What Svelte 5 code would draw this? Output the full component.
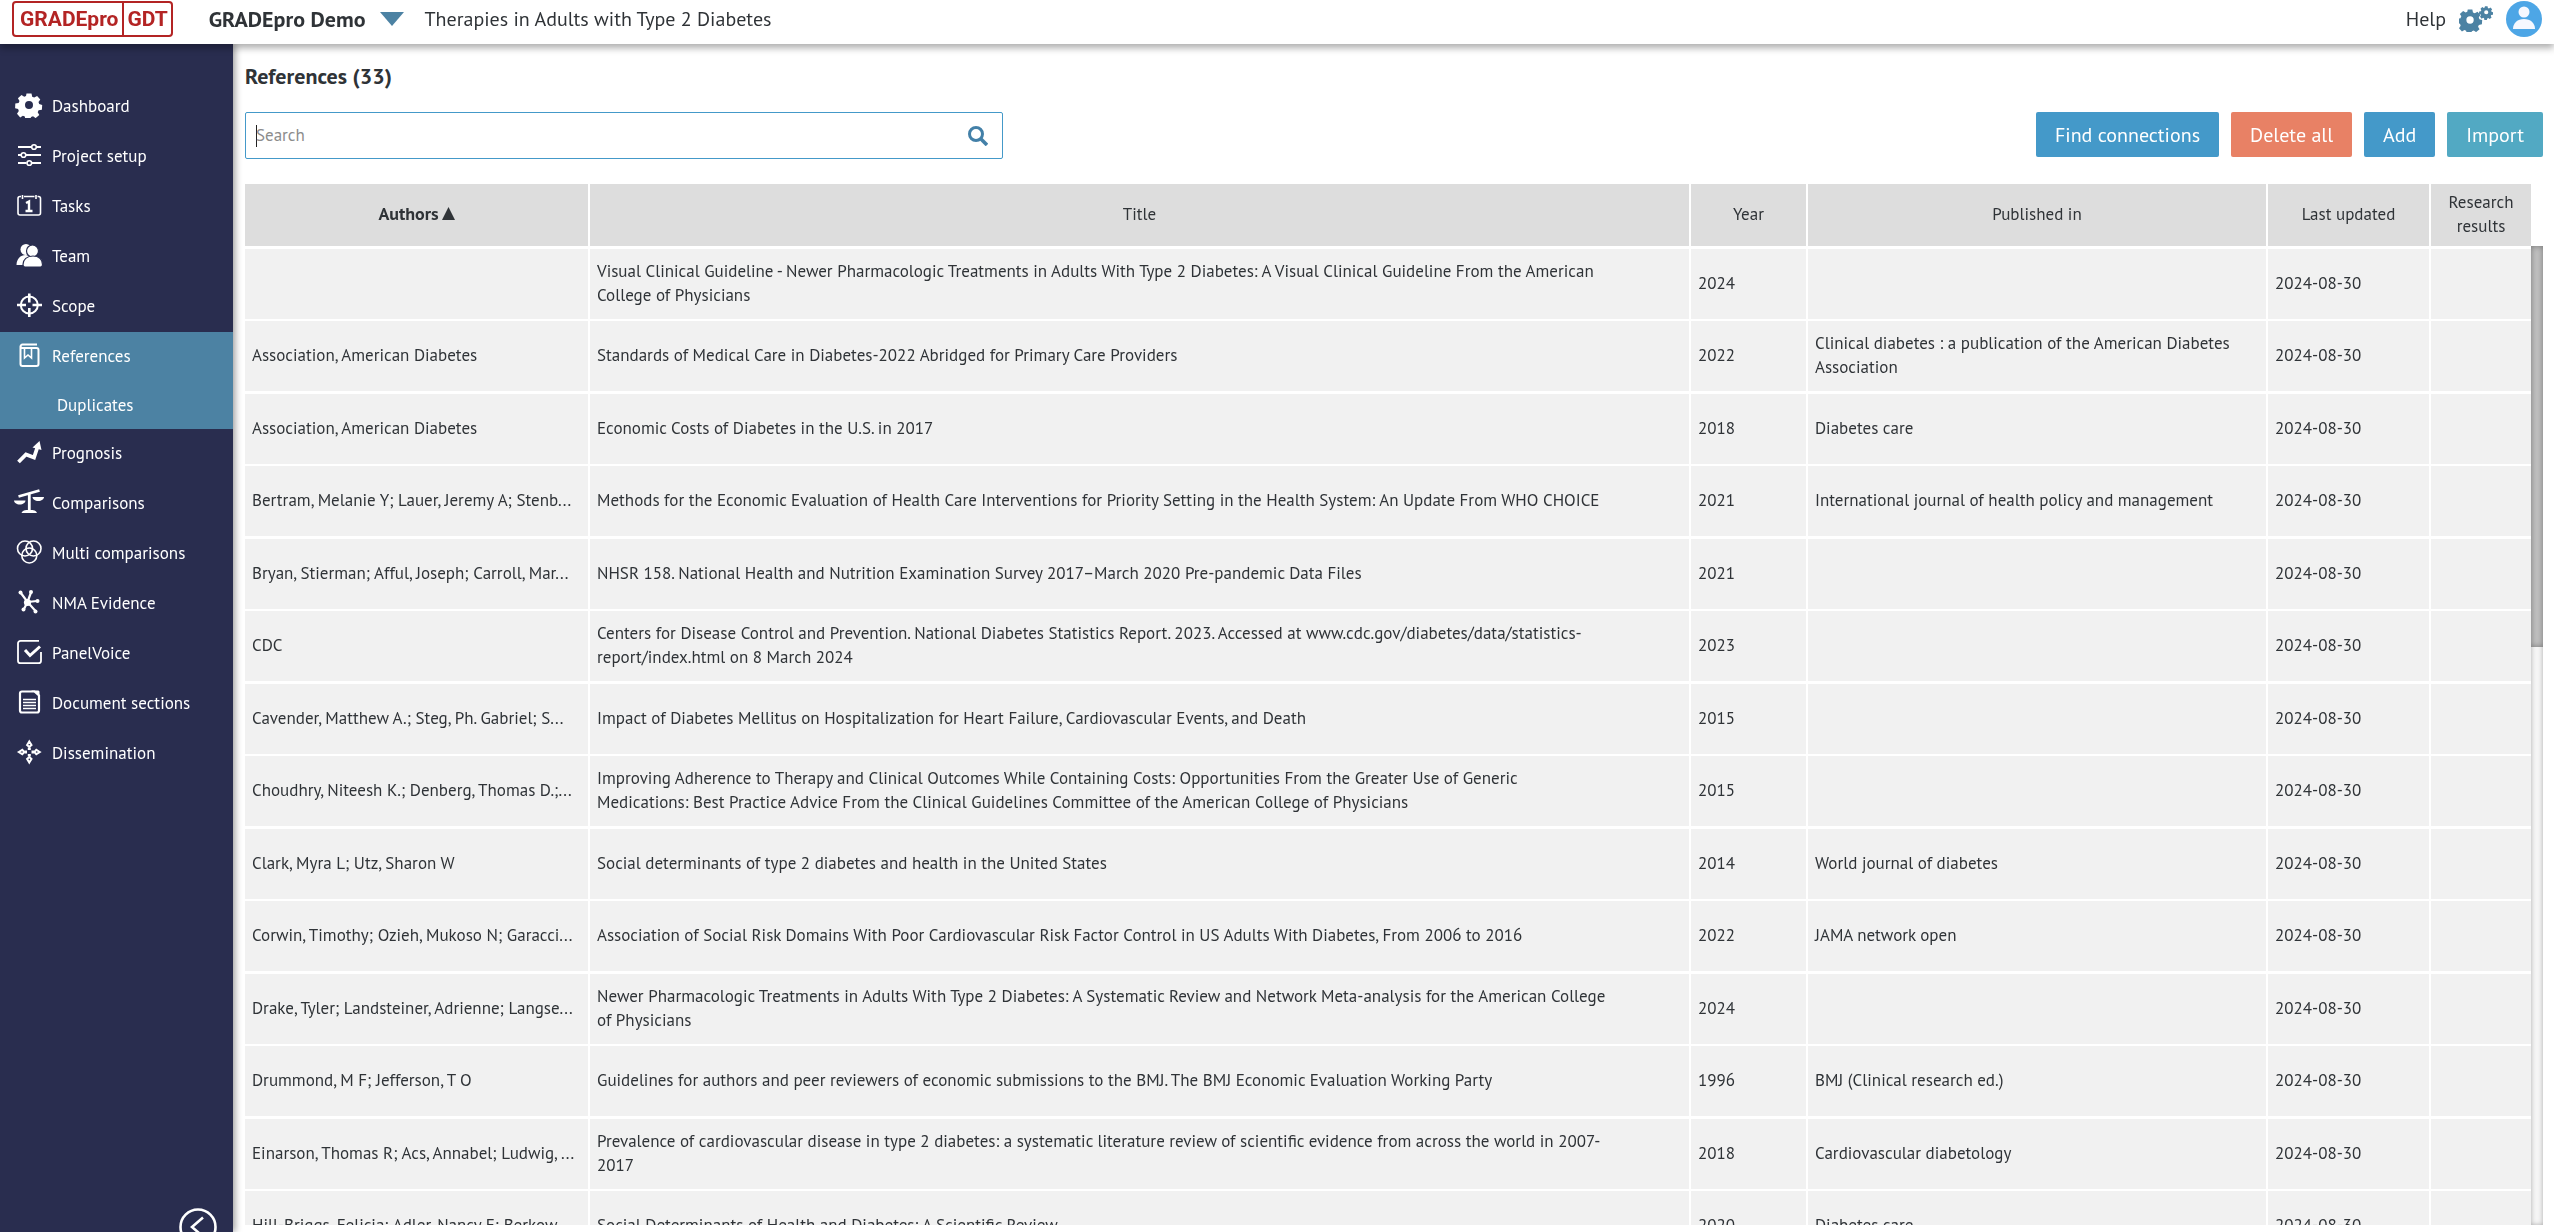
<script lang="ts">
	import { onMount } from 'svelte';

	type Reference = {
		authors: string;
		title: string;
		year: number;
		published: string;
		updated: string;
	};

	const navItems = [
		{ icon: 'gear', label: 'Dashboard' },
		{ icon: 'sliders', label: 'Project setup' },
		{ icon: 'calendar', label: 'Tasks' },
		{ icon: 'team', label: 'Team' },
		{ icon: 'target', label: 'Scope' },
		{ icon: 'book', label: 'References', active: true, child: 'Duplicates' },
		{ icon: 'chart', label: 'Prognosis' },
		{ icon: 'scales', label: 'Comparisons' },
		{ icon: 'rings', label: 'Multi comparisons' },
		{ icon: 'network', label: 'NMA Evidence' },
		{ icon: 'check', label: 'PanelVoice' },
		{ icon: 'document', label: 'Document sections' },
		{ icon: 'arrows', label: 'Dissemination' }
	];

	const updated = '2024-08-30';

	const references: Reference[] = [
		{ authors: '', title: 'Visual Clinical Guideline - Newer Pharmacologic Treatments in Adults With Type 2 Diabetes: A Visual Clinical Guideline From the American College of Physicians', year: 2024, published: '', updated },
		{ authors: 'Association, American Diabetes', title: 'Standards of Medical Care in Diabetes-2022 Abridged for Primary Care Providers', year: 2022, published: 'Clinical diabetes : a publication of the American Diabetes Association', updated },
		{ authors: 'Association, American Diabetes', title: 'Economic Costs of Diabetes in the U.S. in 2017', year: 2018, published: 'Diabetes care', updated },
		{ authors: 'Bertram, Melanie Y; Lauer, Jeremy A; Stenb...', title: 'Methods for the Economic Evaluation of Health Care Interventions for Priority Setting in the Health System: An Update From WHO CHOICE', year: 2021, published: 'International journal of health policy and management', updated },
		{ authors: 'Bryan, Stierman; Afful, Joseph; Carroll, Mar...', title: 'NHSR 158. National Health and Nutrition Examination Survey 2017–March 2020 Pre-pandemic Data Files', year: 2021, published: '', updated },
		{ authors: 'CDC', title: 'Centers for Disease Control and Prevention. National Diabetes Statistics Report. 2023. Accessed at www.cdc.gov/diabetes/data/statistics-report/index.html on 8 March 2024', year: 2023, published: '', updated },
		{ authors: 'Cavender, Matthew A.; Steg, Ph. Gabriel; S...', title: 'Impact of Diabetes Mellitus on Hospitalization for Heart Failure, Cardiovascular Events, and Death', year: 2015, published: '', updated },
		{ authors: 'Choudhry, Niteesh K.; Denberg, Thomas D.;...', title: 'Improving Adherence to Therapy and Clinical Outcomes While Containing Costs: Opportunities From the Greater Use of Generic Medications: Best Practice Advice From the Clinical Guidelines Committee of the American College of Physicians', year: 2015, published: '', updated },
		{ authors: 'Clark, Myra L; Utz, Sharon W', title: 'Social determinants of type 2 diabetes and health in the United States', year: 2014, published: 'World journal of diabetes', updated },
		{ authors: 'Corwin, Timothy; Ozieh, Mukoso N; Garacci...', title: 'Association of Social Risk Domains With Poor Cardiovascular Risk Factor Control in US Adults With Diabetes, From 2006 to 2016', year: 2022, published: 'JAMA network open', updated },
		{ authors: 'Drake, Tyler; Landsteiner, Adrienne; Langse...', title: 'Newer Pharmacologic Treatments in Adults With Type 2 Diabetes: A Systematic Review and Network Meta-analysis for the American College of Physicians', year: 2024, published: '', updated },
		{ authors: 'Drummond, M F; Jefferson, T O', title: 'Guidelines for authors and peer reviewers of economic submissions to the BMJ. The BMJ Economic Evaluation Working Party', year: 1996, published: 'BMJ (Clinical research ed.)', updated },
		{ authors: 'Einarson, Thomas R; Acs, Annabel; Ludwig, ...', title: 'Prevalence of cardiovascular disease in type 2 diabetes: a systematic literature review of scientific evidence from across the world in 2007-2017', year: 2018, published: 'Cardiovascular diabetology', updated },
		{ authors: 'Hill-Briggs, Felicia; Adler, Nancy E; Berkow...', title: 'Social Determinants of Health and Diabetes: A Scientific Review', year: 2020, published: 'Diabetes care', updated }
	];

	let search = $state('');
	let searchEl = $state<HTMLInputElement | null>(null);

	onMount(() => searchEl?.focus());
</script>

{#snippet gear()}
	<path
		fill-rule="evenodd"
		d="M9.5 0.5h5l.7 3.2 2 .9 2.900-1.700 3.200 3.500-1.800 2.700.700 2 3 .8-.3 4.800-3.300.6-.9 2 1.600 2.700-3.700 3.100-2.600-1.800-2 .8-.9 3-4.700-.3-.6-3.200-1.900-.9-2.700 1.700-3.200-3.600 1.800-2.700-.7-2-3-.8.2-4.700 3.300-.6.9-2L.9 5.300 4.500 2.100l2.700 1.700 1.800-.7zM12 8a4 4 0 1 0 0 8 4 4 0 0 0 0-8z"
	/>
{/snippet}

{#snippet navIcon(name: string)}
	<svg class="nav-icon" viewBox="0 0 30 26" fill="none" stroke="currentColor" stroke-width="1.6" aria-hidden="true">
		{#if name === 'gear'}
			<g transform="translate(3 1)" fill="currentColor" stroke="none">{@render gear()}</g>
		{:else if name === 'sliders'}
			<path d="M4 5h13.500M22.500 5H27M4 13h3M12 13h15M4 21h8.500M18 21h9" stroke-width="2" />
			<circle cx="20" cy="5" r="2.300" />
			<circle cx="9.500" cy="13" r="2.300" />
			<circle cx="15.300" cy="21" r="2.300" />
		{:else if name === 'calendar'}
			<path d="M7 4.500H6a2 2 0 0 0-2 2V21a2 2 0 0 0 2 2h18.500a2 2 0 0 0 2-2V6.500a2 2 0 0 0-2-2h-1M10 4.500h10.500M8.500 3v4M22 3v4" />
			<path d="M12 11l3-1.500v9M11.500 19h7" stroke-width="2.400" />
		{:else if name === 'team'}
			<g fill="currentColor" stroke="none">
				<circle cx="12" cy="7.500" r="5.500" />
				<path d="M2.500 23c0-6 4-10 9-10 4 0 6 3 6 10z" />
				<g stroke="#292d4f" stroke-width="1.200">
					<circle cx="18.500" cy="9" r="6" />
					<path d="M9 22.500c0-5 4-8.500 10-8.500s9.500 3.500 9.500 8.500c0 1.500-.5 2.500-2 2.500H11c-1.500 0-2-1-2-2.500z" />
				</g>
			</g>
		{:else if name === 'target'}
			<circle cx="15.300" cy="13" r="8.500" stroke-width="2" />
			<path d="M15.300 1.500v9M15.300 16v9M3 13h9M18.500 13h9.500" stroke-width="2.600" />
		{:else if name === 'book'}
			<path d="M23 2.500H8.500a2 2 0 0 0-2 2V22a2 2 0 0 0 2 2H22.500a2 2 0 0 0 2-2V8a2 2 0 0 0-2-2H8.500a2 2 0 0 1-2-2" stroke-width="2" />
			<path d="M10.500 6v10l3.500-3 3.500 3V6" />
		{:else if name === 'chart'}
			<path d="M4.500 23l7.500-7.500 8 3L23.500 8" stroke-width="3.800" />
			<path d="M18.500 8.500L25.500 2l2 9z" fill="currentColor" stroke="none" />
		{:else if name === 'scales'}
			<path d="M15.300 4v19M4.500 7.500L25.500 1.500" stroke-width="2.800" />
			<path d="M0 11.500h11.500c0 2-2.500 4-5.700 4S0 13.500 0 11.500zM18.500 8H30c0 2-2.500 4-5.700 4S18.500 10 18.500 8zM7.500 24c1-2.500 3-3 7.800-3s6.800.5 7.700 3z" fill="currentColor" stroke="none" />
		{:else if name === 'rings'}
			<circle cx="11" cy="9.500" r="7.500" />
			<circle cx="19.500" cy="9.500" r="7.500" />
			<circle cx="15.300" cy="16.500" r="7.500" />
		{:else if name === 'network'}
			<path d="M6.500 3.500L13.500 13 17 3.500M13.500 13l9.500-1M13.500 13l-3.500 7M13.500 13l8 9" stroke-width="2.200" />
			<g fill="currentColor" stroke="none">
				<circle cx="13.500" cy="13.500" r="3.600" />
				<circle cx="6.500" cy="3.500" r="2" />
				<circle cx="17" cy="3" r="2" />
				<circle cx="23.500" cy="12" r="2" />
				<circle cx="9.500" cy="20.500" r="2" />
				<circle cx="21.500" cy="22.500" r="2" />
			</g>
		{:else if name === 'check'}
			<path d="M25 1.800H6.500a2.500 2.500 0 0 0-2.500 2.500v17.400a2.500 2.500 0 0 0 2.500 2.500h18a2.500 2.500 0 0 0 2.500-2.500V13" stroke-width="1.800" />
			<path d="M11 11l5 5.500L26 7.500" stroke-width="3" />
		{:else if name === 'document'}
			<path d="M8 2.500h12.500l4.500 4V21.500a2 2 0 0 1-2 2H8a2 2 0 0 1-2-2v-17a2 2 0 0 1 2-2z" stroke-width="2.200" />
			<path d="M17 1.500h7.500l1 1V10c0-4-4-6.500-8.500-8.500z" fill="currentColor" stroke="none" />
			<path d="M9 10.500h13M9 13.500h13M9 16.500h13M9 19.500h13" />
		{:else if name === 'arrows'}
			<path d="M15.300 2.500l2.200 3.500-2.200 2-2.200-2zM15.300 23.500l2.200-3.500-2.200-2-2.200 2zM4.800 13l3.500-2.200 2 2.200-2 2.200zM25.800 13l-3.500-2.200-2 2.200 2 2.200z" stroke-width="2" />
			<path d="M15.300 8.500v2.500M15.300 15v2.500M10.500 13h2.500M17.500 13h2.500" stroke-width="3" />
		{/if}
	</svg>
{/snippet}

<div class="app">
	<header class="topbar">
		<a class="logo" href="#home" aria-label="GRADEpro GDT"><span>GRADEpro</span><span class="gdt">GDT</span></a>
		<button class="workspace">
			GRADEpro Demo
			<svg width="24" height="14" viewBox="0 0 24 14" aria-hidden="true"><path d="M0 0h24L12 14z" fill="#4c82a3" /></svg>
		</button>
		<span class="project">Therapies in Adults with Type 2 Diabetes</span>
		<nav class="tools" aria-label="Account">
			<a href="#help">Help</a>
			<button class="icon-btn" aria-label="Settings">
				<svg width="34" height="26" viewBox="0 0 34 26" fill="#4c82a3" aria-hidden="true">
					<g transform="translate(0 3) scale(0.92)">{@render gear()}</g>
					<g transform="translate(21 0) scale(0.52)">{@render gear()}</g>
				</svg>
			</button>
			<button class="icon-btn" aria-label="Profile">
				<svg width="36" height="36" viewBox="0 0 36 36" aria-hidden="true">
					<circle cx="18" cy="18" r="18" fill="#4da6e6" />
					<circle cx="18" cy="11" r="5.500" fill="#f5f8ff" />
					<path d="M7 28c0-6 4.500-10 11-10s11 4 11 10z" fill="#f5f8ff" />
				</svg>
			</button>
		</nav>
	</header>

	<div class="body">
		<aside class="sidebar">
			<nav aria-label="Project">
				{#each navItems as item}
					<div class="nav-group" class:active={item.active}>
						<a class="nav-link" href="#{item.icon}">
							{@render navIcon(item.icon)}
							{item.label}
						</a>
						{#if item.child}
							<a class="nav-sub" href="#duplicates">{item.child}</a>
						{/if}
					</div>
				{/each}
			</nav>
			<button class="collapse" aria-label="Collapse menu">
				<svg width="38" height="38" viewBox="0 0 38 38" fill="none" stroke="#fff" stroke-width="2.600" aria-hidden="true">
					<circle cx="19" cy="19" r="17.500" />
					<path d="M24 9.500L13 19l11 9.500" />
				</svg>
			</button>
		</aside>

		<main>
			<h1>References (33)</h1>
			<div class="toolbar">
				<div class="search">
					<input type="text" placeholder="Search" aria-label="Search" bind:value={search} bind:this={searchEl} />
					<button class="icon-btn" aria-label="Run search">
						<svg width="20" height="20" viewBox="0 0 20 20" fill="none" stroke="#4380a8" stroke-width="3" aria-hidden="true">
							<circle cx="8" cy="8" r="6.500" />
							<path d="M13 13l6 6" stroke-width="3.600" />
						</svg>
					</button>
				</div>
				<div class="actions">
					<button class="btn">Find connections</button>
					<button class="btn danger">Delete all</button>
					<button class="btn">Add</button>
					<button class="btn import">Import</button>
				</div>
			</div>

			<div class="grid">
				<div class="table-wrap">
					<table>
						<colgroup>
							<col class="c-authors" />
							<col />
							<col class="c-year" />
							<col class="c-published" />
							<col class="c-updated" />
							<col class="c-results" />
						</colgroup>
						<thead>
							<tr>
								<th class="sorted">Authors<svg width="13" height="13" viewBox="0 0 13 13" aria-hidden="true"><path d="M6.500 0L13 13H0z" fill="currentColor" /></svg></th>
								<th>Title</th>
								<th>Year</th>
								<th>Published in</th>
								<th>Last updated</th>
								<th>Research results</th>
							</tr>
						</thead>
						<tbody>
							{#each references as ref}
								<tr>
									<td class="authors">{ref.authors}</td>
									<td class="title">{ref.title}</td>
									<td>{ref.year}</td>
									<td>{ref.published}</td>
									<td>{ref.updated}</td>
									<td></td>
								</tr>
							{/each}
						</tbody>
					</table>
				</div>
				<div class="scrollbar"><div class="thumb"></div></div>
			</div>
		</main>
	</div>
</div>

<style>
	:global(body) {
		margin: 0;
	}

	.app {
		height: 100vh;
		display: flex;
		flex-direction: column;
		overflow: hidden;
		background: #fff;
		color: #2f3337;
		font-family: 'PT Sans', Lato, 'Open Sans', sans-serif;
		font-size: 17px;
	}

	a {
		color: inherit;
		text-decoration: none;
	}

	button {
		font: inherit;
		color: inherit;
		border: 0;
		padding: 0;
		background: none;
		cursor: pointer;
	}

	.topbar {
		position: relative;
		z-index: 2;
		height: 44px;
		flex-shrink: 0;
		display: flex;
		align-items: center;
		box-sizing: border-box;
		padding: 0 12px 6px;
		background: #fff;
		box-shadow: 0 4px 7px rgba(0, 0, 0, 0.32);
		font-size: 20px;
	}

	.logo {
		display: flex;
		box-sizing: border-box;
		height: 36px;
		line-height: 32px;
		border: 2px solid #b32424;
		border-radius: 4px;
		color: #b32424;
		font-family: Roboto, sans-serif;
		font-size: 21px;
		font-weight: 700;
	}

	.logo span {
		padding: 0 4px 0 6px;
	}

	.logo .gdt {
		border-left: 2px solid #b32424;
		padding: 0 3px;
	}

	.workspace {
		display: flex;
		align-items: center;
		gap: 15px;
		margin: 0 20px 0 36px;
		font-size: 22px;
		font-weight: 700;
	}

	.tools {
		display: flex;
		align-items: center;
		gap: 13px;
		margin-left: auto;
	}

	.icon-btn {
		display: flex;
	}

	.body {
		flex: 1;
		min-height: 0;
		display: flex;
	}

	.sidebar {
		position: relative;
		z-index: 1;
		width: 233px;
		flex-shrink: 0;
		box-sizing: border-box;
		padding-top: 38px;
		overflow: hidden;
		background: #292d4f;
		color: #fff;
		box-shadow: 2px 0 7px rgba(0, 0, 0, 0.4);
	}

	.nav-link {
		display: flex;
		align-items: center;
		gap: 8px;
		box-sizing: border-box;
		height: 50px;
		padding: 0 0 2px 14px;
	}

	.nav-icon {
		width: 30px;
		height: 26px;
		flex-shrink: 0;
		margin-bottom: 2px;
	}

	.nav-sub {
		display: flex;
		align-items: center;
		box-sizing: border-box;
		height: 47px;
		padding: 0 0 2px 57px;
	}

	.active {
		background: #4c82a3;
	}

	.collapse {
		position: absolute;
		right: 16px;
		bottom: -14px;
		height: 38px;
	}

	main {
		flex: 1;
		min-width: 0;
		display: flex;
		flex-direction: column;
		box-sizing: border-box;
		padding: 16px 11px 7px 12px;
	}

	h1 {
		margin: 0 0 20px;
		font-size: 22px;
		line-height: 32px;
	}

	.toolbar {
		display: flex;
		justify-content: space-between;
		margin-bottom: 25px;
	}

	.search {
		display: flex;
		align-items: center;
		box-sizing: border-box;
		width: 758px;
		height: 47px;
		padding: 0 14px 0 10px;
		border: 1px solid #4499c9;
		border-radius: 2px;
	}

	.search input {
		flex: 1;
		padding: 0 0 2px;
		border: 0;
		outline: 0;
		background: none;
		font: inherit;
	}

	.search input::placeholder {
		color: #8c8c8c;
	}

	/* solid caret while the box is still empty */
	.search input:placeholder-shown:focus {
		caret-color: transparent;
		background: linear-gradient(#222, #222) left center / 1px 22px no-repeat;
	}

	.actions {
		display: flex;
		gap: 12px;
	}

	.btn {
		height: 45px;
		padding: 0 19px;
		border-radius: 2px;
		background: #4499c9;
		color: #fff;
		font-size: 20px;
	}

	.btn.danger {
		background: #e88165;
	}

	.btn.import {
		background: #52a9c3;
	}

	.grid {
		flex: 1;
		min-height: 0;
		display: flex;
	}

	.table-wrap {
		flex: 1;
		min-width: 0;
		overflow: hidden;
	}

	table {
		width: 100%;
		table-layout: fixed;
		border-spacing: 0;
		line-height: 24px;
	}

	.c-authors {
		width: 345px;
	}

	.c-year {
		width: 117px;
	}

	.c-published {
		width: 460px;
	}

	.c-updated {
		width: 163px;
	}

	.c-results {
		width: 100px;
	}

	th,
	td {
		box-sizing: border-box;
		height: 72px;
		padding: 0 7px 2px;
		background: #f1f1f1;
		background-clip: padding-box;
		border-right: 2px solid #fff;
		border-bottom: 2px solid #fff;
		text-align: left;
	}

	th:last-child,
	td:last-child {
		border-right: 0;
	}

	th {
		height: 65px;
		background-color: #ddd;
		border-bottom-width: 3px;
		font-weight: 400;
		text-align: center;
	}

	th.sorted {
		font-size: 18px;
		font-weight: 700;
	}

	.sorted svg {
		margin-left: 3px;
	}

	/* keeps the grid lines at a two and a half pixel rhythm */
	tbody tr:nth-child(even) td {
		height: 73px;
		border-bottom-width: 3px;
	}

	.authors {
		overflow: hidden;
		white-space: nowrap;
	}

	td.title {
		padding-right: 78px;
	}

	.scrollbar {
		width: 12px;
		margin-top: 62px;
		background: #f5f5f5;
		box-shadow: inset 0 0 5px rgba(0, 0, 0, 0.3);
	}

	.thumb {
		height: 41%;
		background: #c1c1c1;
		box-shadow: inset 0 0 6px rgba(0, 0, 0, 0.4);
	}
</style>
